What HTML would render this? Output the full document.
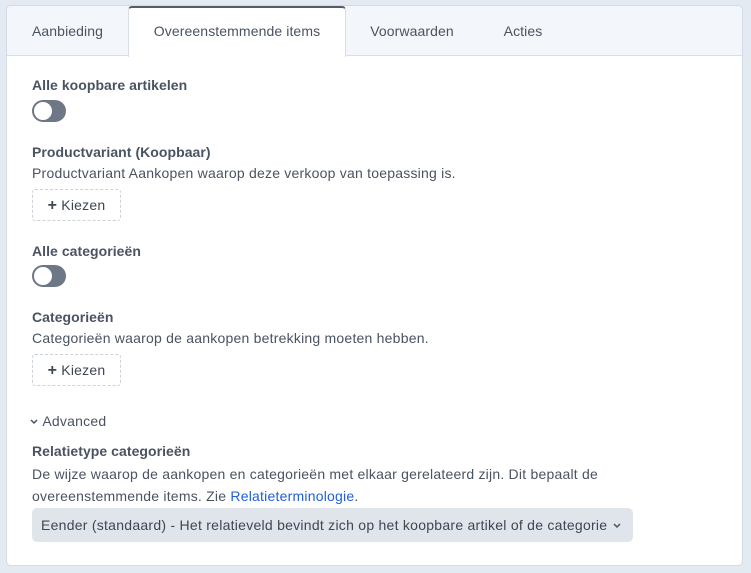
<!DOCTYPE html>
<html><head><style>
body{margin:0;background:#e4eaf2;font-family:"Liberation Sans",sans-serif;color:#4a5361;font-size:14px;letter-spacing:0.22px}
.card{position:absolute;left:6px;top:5px;width:735px;height:559px;background:#fff;border:1px solid #d3dbe6;border-radius:5px;overflow:hidden}
.tabs{position:absolute;left:0;top:0;right:0;height:49px;background:#f3f6fa;border-bottom:1px solid #d8dee8}
.tab{position:absolute;top:0;height:50px;line-height:50px;text-align:center;color:#4a5361;font-size:14px;letter-spacing:0.1px}
.tab.act{background:#fff;border-top:2px solid #525c6b;border-left:1px solid #d8dee8;border-right:1px solid #d8dee8;height:49px;line-height:47px;border-radius:4px 4px 0 0}
.a{position:absolute;left:25px;white-space:nowrap}
.b{font-weight:bold;color:#4a5361;letter-spacing:0.05px}
.tog{position:absolute;left:25px;width:34px;height:22px;border-radius:11px;background:#6e7786}
.tog::after{content:"";position:absolute;left:1px;top:1px;border:1px solid #6e7786;box-sizing:border-box;width:20px;height:20px;border-radius:10px;background:#fff}
.btn{position:absolute;left:25px;width:89px;height:32px;border:1px dashed #ccd2da;border-radius:3px;box-sizing:border-box;line-height:30px;text-align:center;color:#3e4653}
.sel{position:absolute;left:25px;top:502px;width:601px;height:34px;background:#e0e5ec;border-radius:5px;line-height:34px;padding-left:9px;box-sizing:border-box;color:#3e4653;letter-spacing:0.26px}
</style></head><body>
<div class="card">
<div class="tabs">
<div class="tab" style="left:0;width:121px">Aanbieding</div>
<div class="tab act" style="left:121px;width:216px">Overeenstemmende items</div>
<div class="tab" style="left:338px;width:134px">Voorwaarden</div>
<div class="tab" style="left:472px;width:88px">Acties</div>
</div>
<div class="a b" style="top:71px">Alle koopbare artikelen</div>
<div class="tog" style="top:94px"></div>
<div class="a b" style="top:138px">Productvariant (Koopbaar)</div>
<div class="a" style="top:159px">Productvariant Aankopen waarop deze verkoop van toepassing is.</div>
<div class="btn" style="top:183px"><b style="font-size:16px">+</b> Kiezen</div>
<div class="a b" style="top:237px">Alle categorieën</div>
<div class="tog" style="top:259px"></div>
<div class="a b" style="top:303px">Categorieën</div>
<div class="a" style="top:324px">Categorieën waarop de aankopen betrekking moeten hebben.</div>
<div class="btn" style="top:348px"><b style="font-size:16px">+</b> Kiezen</div>
<div class="a" style="top:407px;left:22px"><svg width="10" height="8" viewBox="0 0 10 8"><path d="M2 2l3 3 3-3" stroke="#4a5361" stroke-width="1.5" fill="none"/></svg> Advanced</div>
<div class="a b" style="top:437px">Relatietype categorieën</div>
<div class="a" style="top:457px;line-height:22px">De wijze waarop de aankopen en categorieën met elkaar gerelateerd zijn. Dit bepaalt de<br>overeenstemmende items. Zie <span style="color:#1f5ee0">Relatieterminologie</span>.</div>
<div class="sel">Eender (standaard) - Het relatieveld bevindt zich op het koopbare artikel of de categorie <svg width="10" height="8" viewBox="0 0 10 8"><path d="M2 2l3 3 3-3" stroke="#4a5361" stroke-width="1.5" fill="none"/></svg></div>
</div>
</body></html>
